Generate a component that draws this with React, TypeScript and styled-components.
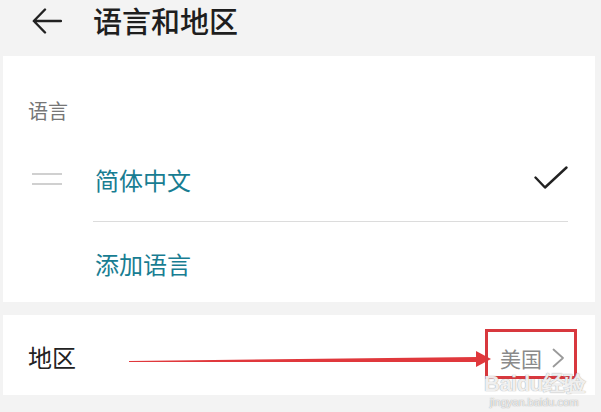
import React from "react";
import styled, { createGlobalStyle } from "styled-components";

const Global = createGlobalStyle`
  html, body { margin: 0; padding: 0; background: #f3f3f3; }
  body { font-family: "Noto Sans CJK SC", "Noto Sans", sans-serif; }
  * { box-sizing: border-box; }
`;

const Page = styled.div`
  position: relative;
  width: 601px;
  height: 412px;
  overflow: hidden;
  background: #f3f3f3;
  padding: 0 6px 0 3px;
`;

const Header = styled.header`
  height: 56px;
  display: flex;
  align-items: center;
  padding-left: 27px;
  gap: 29px;
`;

const Title = styled.h1`
  margin: 0;
  font-size: 29px;
  line-height: 1;
  font-weight: 500;
  color: #1e1e1e;
  padding-bottom: 15px;
`;

const BackBox = styled.div`
  width: 34px;
  height: 36px;
  display: flex;
  align-items: center;
  justify-content: center;
  padding-bottom: 14px;
  box-sizing: content-box;
`;

const Card = styled.section<{ $gapTop?: number }>`
  background: #fff;
  margin-top: ${(p) => p.$gapTop ?? 0}px;
`;

const SectionLabel = styled.div`
  height: 83px;
  padding: 41px 0 0 25px;
  font-size: 20px;
  line-height: 28px;
  color: #767676;
`;

const Row = styled.div<{ $h: number }>`
  display: flex;
  align-items: stretch;
  height: ${(p) => p.$h}px;
`;

const Lead = styled.div`
  width: 90px;
  display: flex;
  align-items: center;
  padding-left: 29px;
`;

const Handle = styled.div`
  width: 30px;
  height: 12px;
  border-top: 2px solid #d0d0d0;
  border-bottom: 2px solid #d0d0d0;
  margin-bottom: 4px;
`;

const Content = styled.div<{ $divider?: boolean }>`
  flex: 1;
  margin-right: 27px;
  display: flex;
  align-items: center;
  justify-content: space-between;
  padding-left: 2px;
  border-bottom: ${(p) => (p.$divider ? "1px solid #dcdcdc" : "none")};
`;

const LinkText = styled.span<{ $shift?: number }>`
  font-size: 24px;
  line-height: 1;
  color: #187d92;
  position: relative;
  top: ${(p) => p.$shift ?? 0}px;
`;

const RegionRow = styled.div`
  height: 80px;
  display: flex;
  align-items: center;
  justify-content: space-between;
  padding: 0 30px 0 25px;
`;

const RegionLabel = styled.span`
  font-size: 24px;
  line-height: 1;
  color: #222;
  position: relative;
  top: 2px;
`;

const ValueGroup = styled.div`
  display: flex;
  align-items: center;
  gap: 10px;
  position: relative;
  top: 3px;
`;

const ValueText = styled.span`
  font-size: 21px;
  line-height: 1;
  color: #8a8a8a;
`;

const Overlay = styled.svg`
  position: absolute;
  left: 0;
  top: 0;
  pointer-events: none;
`;

const Watermark = styled.div`
  position: absolute;
  left: 484px;
  top: 373px;
  width: 100px;
  text-align: center;
  pointer-events: none;
  color: rgba(255, 255, 255, 0.85);
  font-family: "Liberation Sans", Arial, sans-serif;
  text-shadow: 0 0 1px rgba(120, 120, 120, 0.5), 0 0 1px rgba(120, 120, 120, 0.5);
`;

const WmBig = styled.div`
  font-size: 22px;
  font-weight: 700;
  line-height: 22px;
  letter-spacing: -0.5px;
  white-space: nowrap;
`;

const WmSmall = styled.div`
  font-size: 11px;
  line-height: 12px;
  margin-top: 1px;
  white-space: nowrap;
`;

export default function App() {
  return (
    <Page>
      <Global />
      <Header>
        <BackBox>
          <svg width="30" height="26" viewBox="0 0 30 26" fill="none">
            <path d="M29 13H2M13 1.5L1.8 13L13 24.5" stroke="#222" strokeWidth="2.4" strokeLinecap="round" strokeLinejoin="round" />
          </svg>
        </BackBox>
        <Title>语言和地区</Title>
      </Header>

      <Card>
        <SectionLabel>语言</SectionLabel>
        <Row $h={83}>
          <Lead>
            <Handle />
          </Lead>
          <Content $divider>
            <LinkText $shift={0}>简体中文</LinkText>
            <svg width="34" height="24" viewBox="0 0 34 24" fill="none" style={{ marginBottom: 4 }}>
              <path d="M1.5 11.5L11 21.5L32.5 1.5" stroke="#222" strokeWidth="2.4" strokeLinecap="round" strokeLinejoin="round" />
            </svg>
          </Content>
        </Row>
        <Row $h={80}>
          <Lead />
          <Content>
            <LinkText $shift={2}>添加语言</LinkText>
          </Content>
        </Row>
      </Card>

      <Card $gapTop={13}>
        <RegionRow>
          <RegionLabel>地区</RegionLabel>
          <ValueGroup>
            <ValueText>美国</ValueText>
            <svg width="13" height="20" viewBox="0 0 13 20" fill="none">
              <path d="M1.5 1.5L11 10L1.5 18.5" stroke="#9a9a9a" strokeWidth="1.8" strokeLinecap="round" strokeLinejoin="round" />
            </svg>
          </ValueGroup>
        </RegionRow>
      </Card>

      <Overlay width="601" height="412" viewBox="0 0 601 412">
        <polygon points="129,361 478,357 478,362 129,362" fill="#e0383c" />
        <polygon points="476,351 491,359 476,367" fill="#e0383c" />
        <rect x="486.5" y="330.5" width="89" height="47" fill="none" stroke="#d8383e" strokeWidth="3" />
      </Overlay>
      <Watermark>
        <WmBig>Baidu经验</WmBig>
        <WmSmall>jingyan.baidu.com</WmSmall>
      </Watermark>
    </Page>
  );
}
